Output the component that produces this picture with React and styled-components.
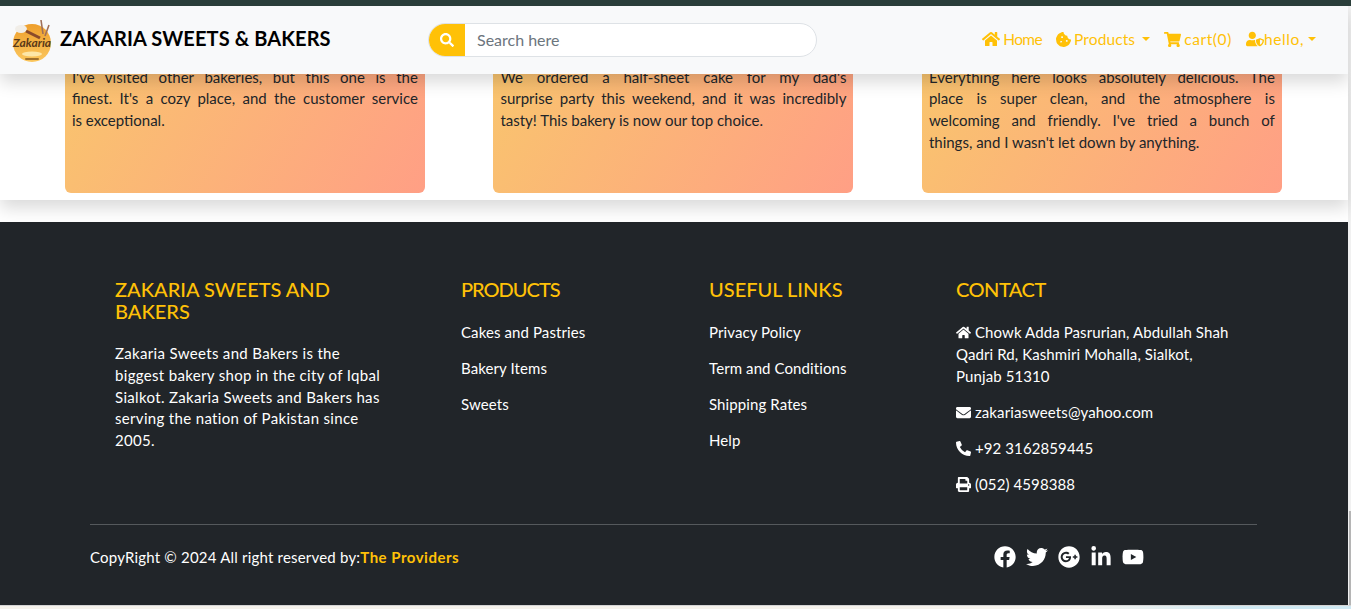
import React from "react";
import styled, { createGlobalStyle } from "styled-components";
import {
  FaHome,
  FaCookieBite,
  FaShoppingCart,
  FaUserShield,
  FaSearch,
  FaEnvelope,
  FaPhoneAlt,
  FaPrint,
  FaFacebook,
  FaTwitter,
  FaGooglePlus,
  FaLinkedinIn,
  FaYoutube,
} from "react-icons/fa";

const GlobalStyle = createGlobalStyle`
  html, body {
    margin: 0;
    padding: 0;
    height: 609px;
    overflow: hidden;
    background: #f1f1f1;
    font-family: "Lato", sans-serif;
  }
  * { box-sizing: border-box; }
`;

const Page = styled.div`
  position: relative;
  width: 1351px;
  height: 609px;
  overflow: hidden;
  background: #f1f1f1;
  display: flex;
  flex-direction: column;
`;
const TopBand = styled.div`
  height: 6px;
  background: #2b3f3b;
  flex: none;
`;
const Navbar = styled.nav`
  position: relative;
  z-index: 5;
  flex: none;
  height: 68px;
  width: 1348px;
  background: #f8f9fa;
  box-shadow: 0 8px 16px rgba(0, 0, 0, 0.15);
  display: flex;
  align-items: center;
  padding: 0 32px 0 12px;
`;
const Brand = styled.div`
  display: flex;
  align-items: center;
  gap: 8px;
  width: 416px;
  flex: none;
`;
const BrandName = styled.span`
  font-size: 20px;
  font-weight: 700;
  color: #000;
  letter-spacing: 0.1px;
  white-space: nowrap;
  margin-bottom: 4px;
`;
const SearchBox = styled.div`
  width: 389px;
  height: 34px;
  flex: none;
  display: flex;
  border: 1px solid #dee2e6;
  border-radius: 17px;
  overflow: hidden;
  background: #fff;
`;
const SearchBtn = styled.div`
  width: 36px;
  background: #ffc107;
  color: #fff;
  display: flex;
  align-items: center;
  justify-content: center;
  font-size: 14px;
`;
const SearchText = styled.div`
  padding-left: 12px;
  font-size: 16px;
  line-height: 31px;
  color: #6c757d;
`;
const NavLinks = styled.div`
  margin-left: auto;
  display: flex;
  align-items: center;
  gap: 14px;
  color: #ffc107;
  font-size: 15.5px;
  margin-bottom: 2px;
`;
const NavLink = styled.span`
  display: flex;
  align-items: center;
  gap: ${(p) => p.$gap}px;
  white-space: nowrap;
  letter-spacing: ${(p) => p.$ls || 0}px;
`;
const Caret = styled.i`
  width: 0;
  height: 0;
  margin-left: 4px;
  border-top: 4.8px solid currentColor;
  border-left: 4.8px solid transparent;
  border-right: 4.8px solid transparent;
`;
const Reviews = styled.section`
  flex: none;
  width: 1348px;
  height: 126px;
  background: #fff;
  box-shadow: 0 8px 16px rgba(0, 0, 0, 0.15);
  display: flex;
  justify-content: space-between;
  padding: 0 66.1px 0 64.9px;
  position: relative;
`;
const Card = styled.div`
  width: 360px;
  height: 119px;
  padding: 0 7px;
  border-radius: 0 0 6px 6px;
  background: linear-gradient(120deg, #f9c46e 0%, #ff9f85 100%);
  color: #212529;
  font-size: 15px;
  line-height: 21.8px;
  overflow: hidden;
`;
const CardText = styled.p`
  margin: -7.5px 0 0;
`;
const CardLine = styled.span`
  display: block;
  text-align: justify;
  text-align-last: ${(p) => (p.$last ? "left" : "justify")};
`;
const Gap = styled.div`
  flex: none;
  height: 22px;
  width: 1348px;
  background: #fff;
`;
const Footer = styled.footer`
  flex: none;
  width: 1348px;
  height: 383px;
  background: #212529;
  color: #fff;
  padding: 0 91px 0 90px;
`;
const Columns = styled.div`
  display: grid;
  grid-template-columns: 346px 248px 247px 1fr;
  height: 303px;
  padding: 56px 0 0 25px;
  border-bottom: 1px solid #55595c;
`;
const ColTitle = styled.h5`
  margin: 0 0 21px;
  font-size: 20px;
  font-weight: 500;
  line-height: 22px;
  color: #ffc107;
  width: 270px;
  letter-spacing: ${(p) => p.$ls || 0}px;
`;
const About = styled.p`
  margin: 1px 0 0;
  font-size: 15px;
  line-height: 21.8px;
  white-space: nowrap;
  letter-spacing: 0.33px;
`;
const Item = styled.p`
  margin: 0 0 14px;
  font-size: 15px;
  line-height: 22px;
  width: 285px;
  letter-spacing: 0.1px;
  svg {
    vertical-align: -2px;
    font-size: 15px;
  }
`;
const Bottom = styled.div`
  display: flex;
  align-items: center;
  justify-content: space-between;
  height: 65px;
  padding-right: 113px;
`;
const Copy = styled.div`
  font-size: 15px;
  letter-spacing: 0.2px;
  margin-bottom: 2px;
`;
const Provider = styled.span`
  color: #ffc107;
  font-weight: 700;
  letter-spacing: 0.5px;
`;
const Socials = styled.div`
  display: flex;
  gap: 10px;
  font-size: 22px;
  align-items: center;
  margin-bottom: 2px;
`;
const BottomStrip = styled.div`
  flex: none;
  height: 4px;
  border-top: 1px solid #d4d4d4;
  background: linear-gradient(90deg, #f5f2ec 0%, #f5f2ec 80%, #cfe9f3 92%);
`;
const ScrollThumb = styled.div`
  position: absolute;
  right: 0;
  top: 511px;
  width: 2px;
  height: 94px;
  background: #b5b5b5;
`;

const Logo = () => (
  <svg width="40" height="44" viewBox="0 0 40 44">
    <defs>
      <linearGradient id="logoFill" x1="0" y1="0" x2="0" y2="1">
        <stop offset="0" stopColor="#ee9f2c" />
        <stop offset="1" stopColor="#fbc75e" />
      </linearGradient>
    </defs>
    <circle cx="20" cy="25" r="19" fill="url(#logoFill)" />
    <ellipse cx="9" cy="11" rx="6" ry="4" fill="#f1eee8" />
    <path d="M14 13l14 7" stroke="#8a4a2a" strokeWidth="3" fill="none" />
    <path d="M29 2l2 14M37 7l-4 11" stroke="#a0705a" strokeWidth="1.6" fill="none" />
    <text x="20" y="29" fontSize="12" fontWeight="700" fontStyle="italic" textAnchor="middle" fill="#5a3a18" fontFamily="Lato, sans-serif">
      Zakaria
    </text>
    <ellipse cx="20" cy="36" rx="10" ry="2.5" fill="#fde7a8" />
    <rect x="13" y="40" width="14" height="2" rx="1" fill="#a0702c" />
  </svg>
);

const reviews = [
  [
    "I've visited other bakeries, but this one is the",
    "finest. It's a cozy place, and the customer service",
    "is exceptional.",
  ],
  [
    "We ordered a half-sheet cake for my dad's",
    "surprise party this weekend, and it was incredibly",
    "tasty! This bakery is now our top choice.",
  ],
  [
    "Everything here looks absolutely delicious. The",
    "place is super clean, and the atmosphere is",
    "welcoming and friendly. I've tried a bunch of",
    "things, and I wasn't let down by anything.",
  ],
];

export default function App() {
  return (
    <Page>
      <GlobalStyle />
      <TopBand />
      <Navbar>
        <Brand>
          <Logo />
          <BrandName>ZAKARIA SWEETS &amp; BAKERS</BrandName>
        </Brand>
        <SearchBox>
          <SearchBtn><FaSearch /></SearchBtn>
          <SearchText>Search here</SearchText>
        </SearchBox>
        <NavLinks>
          <NavLink $gap={3} $ls={-0.6}><FaHome size={18} /> Home</NavLink>
          <NavLink $gap={3} $ls={0.1}><FaCookieBite size={15} /> Products <Caret /></NavLink>
          <NavLink $gap={3} $ls={0.6}><FaShoppingCart size={17} /> cart(0)</NavLink>
          <NavLink $gap={0} $ls={0.6}><FaUserShield size={18} />hello, <Caret /></NavLink>
        </NavLinks>
      </Navbar>
      <Reviews>
        {reviews.map((lines) => (
          <Card key={lines[0]}>
            <CardText>
              {lines.map((line, i) => (
                <CardLine key={line} $last={i === lines.length - 1}>{line}</CardLine>
              ))}
            </CardText>
          </Card>
        ))}
      </Reviews>
      <Gap />
      <Footer>
        <Columns>
          <div>
            <ColTitle>ZAKARIA SWEETS AND BAKERS</ColTitle>
            <About>
              Zakaria Sweets and Bakers is the<br />
              biggest bakery shop in the city of Iqbal<br />
              Sialkot. Zakaria Sweets and Bakers has<br />
              serving the nation of Pakistan since<br />
              2005.
            </About>
          </div>
          <div>
            <ColTitle $ls={-1}>PRODUCTS</ColTitle>
            <Item>Cakes and Pastries</Item>
            <Item>Bakery Items</Item>
            <Item>Sweets</Item>
          </div>
          <div>
            <ColTitle>USEFUL LINKS</ColTitle>
            <Item>Privacy Policy</Item>
            <Item>Term and Conditions</Item>
            <Item>Shipping Rates</Item>
            <Item>Help</Item>
          </div>
          <div>
            <ColTitle $ls={-0.5}>CONTACT</ColTitle>
            <Item><FaHome /> Chowk Adda Pasrurian, Abdullah Shah Qadri Rd, Kashmiri Mohalla, Sialkot, Punjab 51310</Item>
            <Item><FaEnvelope /> zakariasweets@yahoo.com</Item>
            <Item><FaPhoneAlt /> +92 3162859445</Item>
            <Item><FaPrint /> (052) 4598388</Item>
          </div>
        </Columns>
        <Bottom>
          <Copy>CopyRight © 2024 All right reserved by:<Provider>The Providers</Provider></Copy>
          <Socials>
            <FaFacebook />
            <FaTwitter />
            <FaGooglePlus />
            <FaLinkedinIn />
            <FaYoutube />
          </Socials>
        </Bottom>
      </Footer>
      <BottomStrip />
      <ScrollThumb />
    </Page>
  );
}
